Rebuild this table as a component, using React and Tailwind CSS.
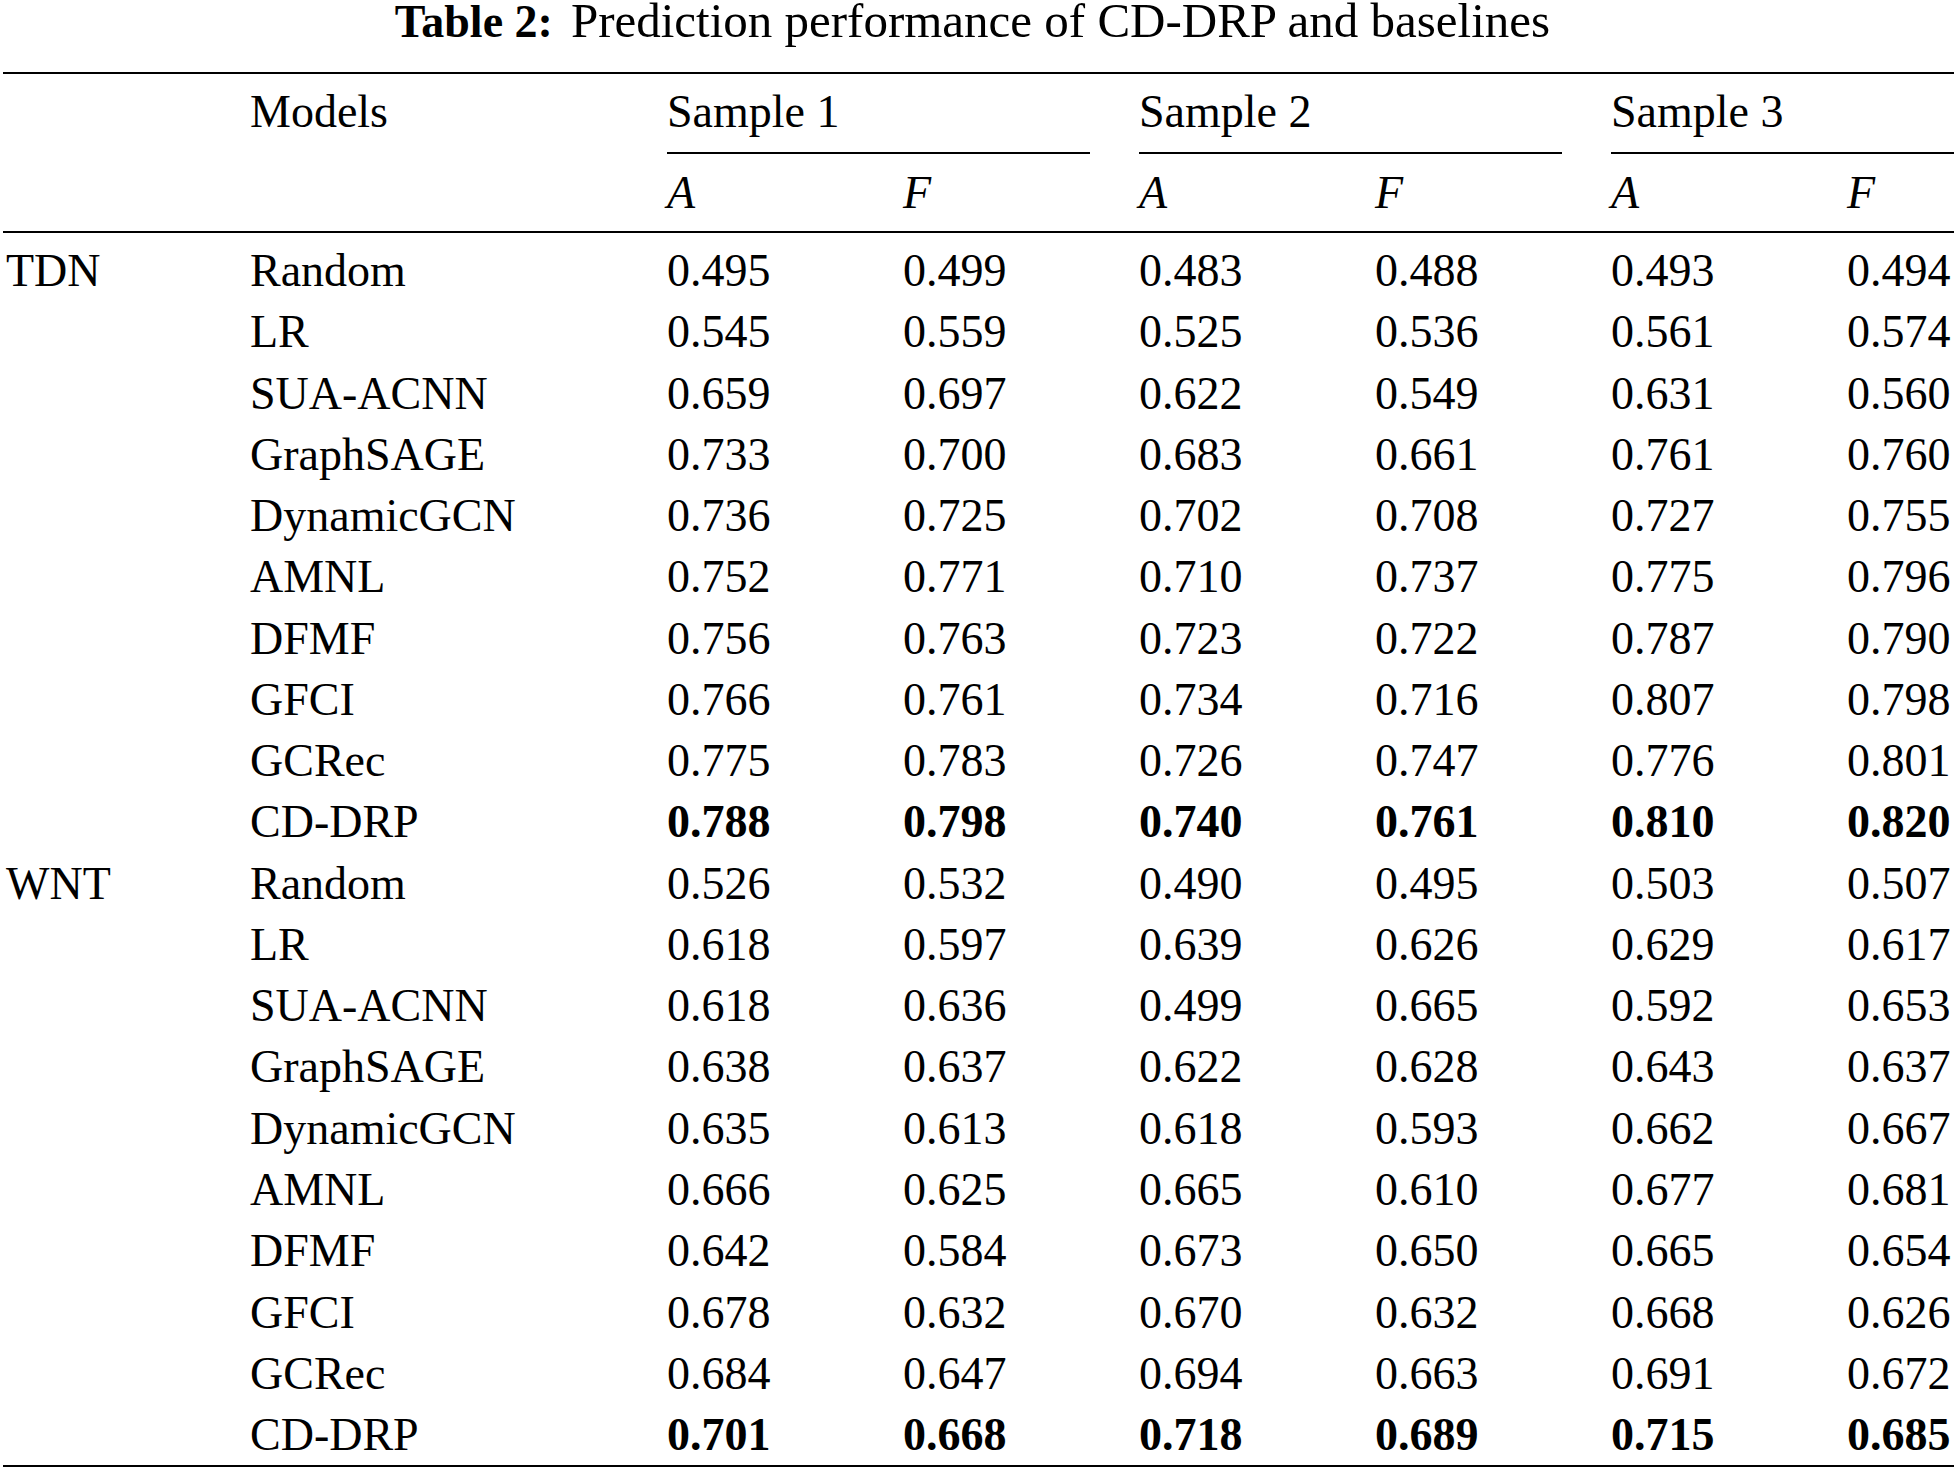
const tdn = [
  ["Random", "0.495", "0.499", "0.483", "0.488", "0.493", "0.494"],
  ["LR", "0.545", "0.559", "0.525", "0.536", "0.561", "0.574"],
  ["SUA-ACNN", "0.659", "0.697", "0.622", "0.549", "0.631", "0.560"],
  ["GraphSAGE", "0.733", "0.700", "0.683", "0.661", "0.761", "0.760"],
  ["DynamicGCN", "0.736", "0.725", "0.702", "0.708", "0.727", "0.755"],
  ["AMNL", "0.752", "0.771", "0.710", "0.737", "0.775", "0.796"],
  ["DFMF", "0.756", "0.763", "0.723", "0.722", "0.787", "0.790"],
  ["GFCI", "0.766", "0.761", "0.734", "0.716", "0.807", "0.798"],
  ["GCRec", "0.775", "0.783", "0.726", "0.747", "0.776", "0.801"],
  ["CD-DRP", "0.788", "0.798", "0.740", "0.761", "0.810", "0.820"],
];

const wnt = [
  ["Random", "0.526", "0.532", "0.490", "0.495", "0.503", "0.507"],
  ["LR", "0.618", "0.597", "0.639", "0.626", "0.629", "0.617"],
  ["SUA-ACNN", "0.618", "0.636", "0.499", "0.665", "0.592", "0.653"],
  ["GraphSAGE", "0.638", "0.637", "0.622", "0.628", "0.643", "0.637"],
  ["DynamicGCN", "0.635", "0.613", "0.618", "0.593", "0.662", "0.667"],
  ["AMNL", "0.666", "0.625", "0.665", "0.610", "0.677", "0.681"],
  ["DFMF", "0.642", "0.584", "0.673", "0.650", "0.665", "0.654"],
  ["GFCI", "0.678", "0.632", "0.670", "0.632", "0.668", "0.626"],
  ["GCRec", "0.684", "0.647", "0.694", "0.663", "0.691", "0.672"],
  ["CD-DRP", "0.701", "0.668", "0.718", "0.689", "0.715", "0.685"],
];

const cols = "grid grid-cols-[244px_417px_236px_236px_236px_236px_236px_1fr] pl-[3px]";

function Group({ name, rows }) {
  return rows.map((r, i) => {
    const best = r[0] === "CD-DRP";
    return (
      <div key={name + r[0]} className={`${cols} leading-[61.26px]`}>
        <div>{i === 0 ? name : ""}</div>
        <div>{r[0]}</div>
        {r.slice(1).map((v, j) => (
          <div key={j} className={best ? "font-bold" : ""}>
            {v}
          </div>
        ))}
      </div>
    );
  });
}

export default function App() {
  return (
    <div className="min-h-[1475px] w-[1954px] bg-white text-black font-['Liberation_Serif',serif] text-[46px]">
      <h1 className="h-[41px] text-center text-[49px] leading-[41px] pr-[9px] whitespace-nowrap">
        <span className="font-bold text-[46px]">Table 2:</span>
        <span className="ml-[18px]">Prediction performance of CD-DRP and baselines</span>
      </h1>

      <div className="ml-[3px] mt-[31px] border-t-2 border-black">
        <div className={`${cols} pt-[7px] leading-[61px]`}>
          <div />
          <div>Models</div>
          {["Sample 1", "Sample 2", "Sample 3"].map((s, i) => (
            <div key={s} className="col-span-2">
              <div>{s}</div>
              <div className={`mt-[10px] h-[1.5px] bg-black ${i === 2 ? "w-full" : "w-[423px]"}`} />
            </div>
          ))}
        </div>

        <div className={`${cols} pt-[8px] pb-[8px] leading-[61px] italic`}>
          <div />
          <div />
          <div>A</div>
          <div>F</div>
          <div>A</div>
          <div>F</div>
          <div>A</div>
          <div>F</div>
        </div>

        <div className="border-t-2 border-black pt-[7.5px] border-b-2">
          <Group name="TDN" rows={tdn} />
          <Group name="WNT" rows={wnt} />
        </div>
      </div>
    </div>
  );
}
